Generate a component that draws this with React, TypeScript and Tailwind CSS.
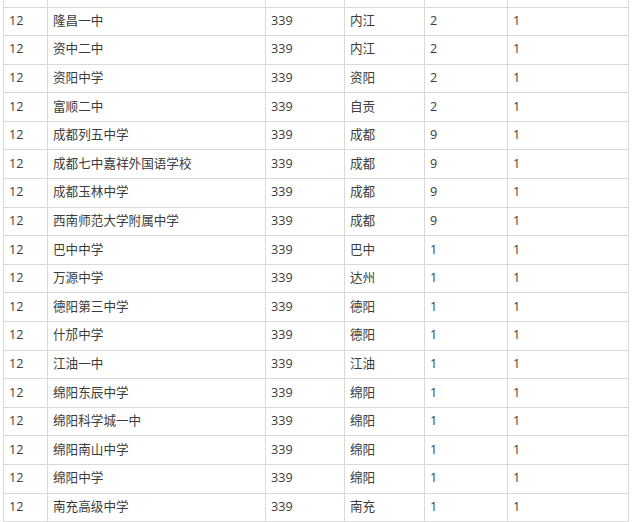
const rows: [string, string, string][] = [
  ['隆昌一中', '内江', '2'],
  ['资中二中', '内江', '2'],
  ['资阳中学', '资阳', '2'],
  ['富顺二中', '自贡', '2'],
  ['成都列五中学', '成都', '9'],
  ['成都七中嘉祥外国语学校', '成都', '9'],
  ['成都玉林中学', '成都', '9'],
  ['西南师范大学附属中学', '成都', '9'],
  ['巴中中学', '巴中', '1'],
  ['万源中学', '达州', '1'],
  ['德阳第三中学', '德阳', '1'],
  ['什邡中学', '德阳', '1'],
  ['江油一中', '江油', '1'],
  ['绵阳东辰中学', '绵阳', '1'],
  ['绵阳科学城一中', '绵阳', '1'],
  ['绵阳南山中学', '绵阳', '1'],
  ['绵阳中学', '绵阳', '1'],
  ['南充高级中学', '南充', '1'],
];

const widths = ['w-[44px]', 'w-[218px]', 'w-[79px]', 'w-[80px]', 'w-[83px]', 'w-[121px]'];

const cell = 'border border-[#d9d9d9] pl-[5px] pr-1 text-left align-middle font-normal';

export default function App() {
  return (
    <div className="h-[522px] w-[633px] overflow-hidden bg-white pl-[3px] text-[12.6px] text-[#3c3c3c] [font-family:'Open_Sans','Noto_Sans_CJK_SC',sans-serif]">
      <table className="table-fixed border-collapse">
        <colgroup>
          {widths.map((w, i) => (
            <col key={i} className={w} />
          ))}
        </colgroup>
        <tbody>
          <tr className="h-[7px]">
            {widths.map((_, i) => (
              <td key={i} className="border-x border-b border-[#d9d9d9] p-0" />
            ))}
          </tr>
          {rows.map(([school, city, n], i) => (
            <tr key={i} className="h-[28.6px]">
              <td className={cell}>12</td>
              <td className={cell}>{school}</td>
              <td className={cell}>339</td>
              <td className={cell}>{city}</td>
              <td className={cell}>{n}</td>
              <td className={cell}>1</td>
            </tr>
          ))}
          <tr className="h-[28px]">
            {widths.map((_, i) => (
              <td key={i} className={cell} />
            ))}
          </tr>
        </tbody>
      </table>
    </div>
  );
}
